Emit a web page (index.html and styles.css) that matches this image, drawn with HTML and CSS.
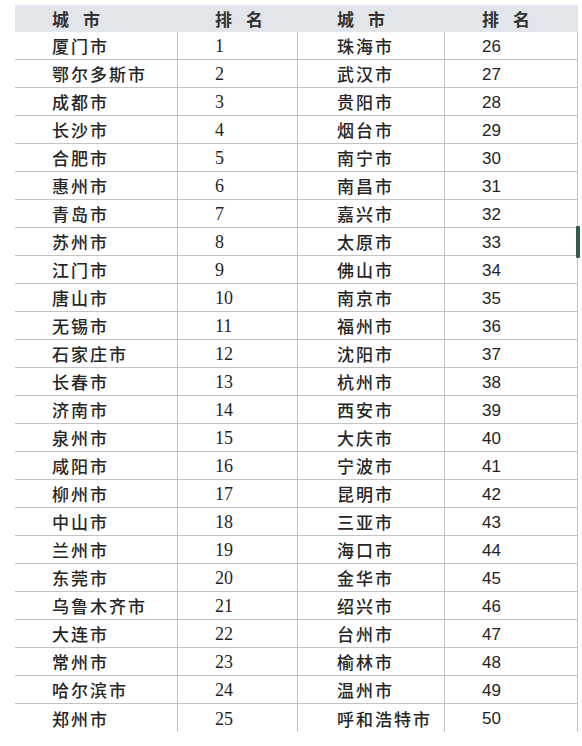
FILE: index.html
```html
<!DOCTYPE html>
<html lang="zh">
<head>
<meta charset="utf-8">
<link rel="stylesheet" href="styles.css">
</head>
<body>
<div class="sheet">
  <div class="table">
    <div class="head">
      <div class="h c1">城市</div>
      <div class="h c2">排名</div>
      <div class="h c3">城市</div>
      <div class="h c4">排名</div>
    </div>
    <div class="row"><div class="cell city">厦门市</div><div class="cell num">1</div><div class="cell city r">珠海市</div><div class="cell num r">26</div></div>
    <div class="row"><div class="cell city">鄂尔多斯市</div><div class="cell num">2</div><div class="cell city r">武汉市</div><div class="cell num r">27</div></div>
    <div class="row"><div class="cell city">成都市</div><div class="cell num">3</div><div class="cell city r">贵阳市</div><div class="cell num r">28</div></div>
    <div class="row"><div class="cell city">长沙市</div><div class="cell num">4</div><div class="cell city r">烟台市</div><div class="cell num r">29</div></div>
    <div class="row"><div class="cell city">合肥市</div><div class="cell num">5</div><div class="cell city r">南宁市</div><div class="cell num r">30</div></div>
    <div class="row"><div class="cell city">惠州市</div><div class="cell num">6</div><div class="cell city r">南昌市</div><div class="cell num r">31</div></div>
    <div class="row"><div class="cell city">青岛市</div><div class="cell num">7</div><div class="cell city r">嘉兴市</div><div class="cell num r">32</div></div>
    <div class="row"><div class="cell city">苏州市</div><div class="cell num">8</div><div class="cell city r">太原市</div><div class="cell num r">33</div></div>
    <div class="row"><div class="cell city">江门市</div><div class="cell num">9</div><div class="cell city r">佛山市</div><div class="cell num r">34</div></div>
    <div class="row"><div class="cell city">唐山市</div><div class="cell num">10</div><div class="cell city r">南京市</div><div class="cell num r">35</div></div>
    <div class="row"><div class="cell city">无锡市</div><div class="cell num">11</div><div class="cell city r">福州市</div><div class="cell num r">36</div></div>
    <div class="row"><div class="cell city">石家庄市</div><div class="cell num">12</div><div class="cell city r">沈阳市</div><div class="cell num r">37</div></div>
    <div class="row"><div class="cell city">长春市</div><div class="cell num">13</div><div class="cell city r">杭州市</div><div class="cell num r">38</div></div>
    <div class="row"><div class="cell city">济南市</div><div class="cell num">14</div><div class="cell city r">西安市</div><div class="cell num r">39</div></div>
    <div class="row"><div class="cell city">泉州市</div><div class="cell num">15</div><div class="cell city r">大庆市</div><div class="cell num r">40</div></div>
    <div class="row"><div class="cell city">咸阳市</div><div class="cell num">16</div><div class="cell city r">宁波市</div><div class="cell num r">41</div></div>
    <div class="row"><div class="cell city">柳州市</div><div class="cell num">17</div><div class="cell city r">昆明市</div><div class="cell num r">42</div></div>
    <div class="row"><div class="cell city">中山市</div><div class="cell num">18</div><div class="cell city r">三亚市</div><div class="cell num r">43</div></div>
    <div class="row"><div class="cell city">兰州市</div><div class="cell num">19</div><div class="cell city r">海口市</div><div class="cell num r">44</div></div>
    <div class="row"><div class="cell city">东莞市</div><div class="cell num">20</div><div class="cell city r">金华市</div><div class="cell num r">45</div></div>
    <div class="row"><div class="cell city">乌鲁木齐市</div><div class="cell num">21</div><div class="cell city r">绍兴市</div><div class="cell num r">46</div></div>
    <div class="row"><div class="cell city">大连市</div><div class="cell num">22</div><div class="cell city r">台州市</div><div class="cell num r">47</div></div>
    <div class="row"><div class="cell city">常州市</div><div class="cell num">23</div><div class="cell city r">榆林市</div><div class="cell num r">48</div></div>
    <div class="row"><div class="cell city">哈尔滨市</div><div class="cell num">24</div><div class="cell city r">温州市</div><div class="cell num r">49</div></div>
    <div class="row last"><div class="cell city">郑州市</div><div class="cell num">25</div><div class="cell city r">呼和浩特市</div><div class="cell num r">50</div></div>
  </div>
  <div class="mark"></div>
</div>
</body>
</html>
```
FILE: styles.css
```css
html, body {
  margin: 0;
  padding: 0;
  background: #ffffff;
}
body {
  width: 582px;
  height: 746px;
  overflow: hidden;
  font-family: "Noto Sans CJK SC", "Liberation Sans", sans-serif;
  color: #2e2e2e;
}
.sheet {
  position: relative;
  padding: 5px 0 0 15px;
}
.table {
  width: 563px;
}
.head,
.row {
  display: grid;
  grid-template-columns: 163px 120px 147px 133px;
}
.head {
  height: 27px;
  background: #e2e6eb;
}
.h {
  display: flex;
  align-items: center;
  padding-left: 37px;
  font-size: 17px;
  font-weight: 700;
  letter-spacing: 14px;
  color: #333;
}
.h.c3 { padding-left: 39px; }
.row {
  height: 28px;
}
.cell {
  display: flex;
  align-items: center;
  box-sizing: border-box;
  height: 28px;
  padding-left: 37px;
  border-bottom: 1px solid #c3c3c3;
  border-right: 1px solid #c3c3c3;
}
.row.last .cell {
  border-bottom: none;
}
.city {
  font-size: 17px;
  font-weight: 500;
  letter-spacing: 2px;
  color: #262626;
}
.city.r {
  padding-left: 39px;
}
.num {
  font-family: "Liberation Serif", serif;
  font-size: 18px;
  color: #1f1f1f;
  padding-left: 37px;
  padding-top: 2px;
}
.num.r {
  font-family: "Liberation Sans", sans-serif;
  font-size: 17px;
}
.mark {
  position: absolute;
  left: 576px;
  top: 226px;
  width: 4px;
  height: 32px;
  background: #2f5d45;
  border-radius: 1px;
}
```
